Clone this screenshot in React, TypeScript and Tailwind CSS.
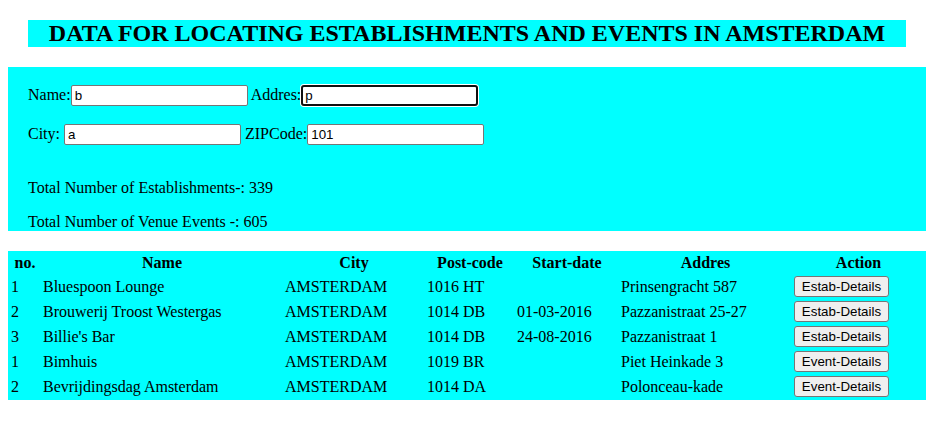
const rows = [
  { no: 1, name: 'Bluespoon Lounge', city: 'AMSTERDAM', zip: '1016 HT', start: '', addr: 'Prinsengracht 587', action: 'Estab-Details' },
  { no: 2, name: 'Brouwerij Troost Westergas', city: 'AMSTERDAM', zip: '1014 DB', start: '01-03-2016', addr: 'Pazzanistraat 25-27', action: 'Estab-Details' },
  { no: 3, name: "Billie's Bar", city: 'AMSTERDAM', zip: '1014 DB', start: '24-08-2016', addr: 'Pazzanistraat 1', action: 'Estab-Details' },
  { no: 1, name: 'Bimhuis', city: 'AMSTERDAM', zip: '1019 BR', start: '', addr: 'Piet Heinkade 3', action: 'Event-Details' },
  { no: 2, name: 'Bevrijdingsdag Amsterdam', city: 'AMSTERDAM', zip: '1014 DA', start: '', addr: 'Polonceau-kade', action: 'Event-Details' },
]

const inputCls =
  "h-[21px] w-[177px] rounded-[2px] border border-[#767676] bg-white px-[3px] font-['Liberation_Sans',Arial,sans-serif] text-[13.33px] text-black outline-none"

export default function App() {
  return (
    <div className="min-h-screen bg-white font-['Liberation_Serif','Times_New_Roman',serif] text-[16px] text-black">
      <div className="ml-[8px] w-[918px] pt-[20px]">
        <h1 className="mx-[20px] bg-[#00ffff] text-center text-[24px] leading-[27px] font-bold">
          DATA FOR LOCATING ESTABLISHMENTS AND EVENTS IN AMSTERDAM
        </h1>

        <div className="mt-[20px] bg-[#00ffff] px-[20px] pt-[18px] leading-[18px]">
          <div className="flex items-baseline">
            <span>Name:</span>
            <input className={inputCls} defaultValue="b" />
            <span className="ml-[3px]">Addres:</span>
            <input
              className="h-[21px] w-[177px] rounded-[3px] border-2 border-[#101010] bg-white px-[2px] font-['Liberation_Sans',Arial,sans-serif] text-[13.33px] text-black shadow-[0_0_0_1px_white] outline-none"
              defaultValue="p"
            />
          </div>
          <div className="mt-[18px] flex items-baseline">
            <span className="mr-[4px]">City:</span>
            <input className={inputCls} defaultValue="a" />
            <span className="ml-[4px]">ZIPCode:</span>
            <input className={inputCls} defaultValue="101" />
          </div>
          <div className="mt-[34px]">Total Number of Establishments-: 339</div>
          <div className="mt-[16px]">Total Number of Venue Events -: 605</div>
        </div>

        <table className="mt-[20px] w-[918px] table-fixed border-separate border-spacing-[2px] bg-[#00ffff] leading-[18px]">
          <thead>
            <tr>
              <th className="w-[30px] p-px text-center font-bold">no.</th>
              <th className="w-[240px] p-px text-center font-bold">Name</th>
              <th className="w-[140px] p-px text-center font-bold">City</th>
              <th className="w-[88px] p-px text-center font-bold">Post-code</th>
              <th className="w-[102px] p-px text-center font-bold">Start-date</th>
              <th className="w-[171px] p-px text-center font-bold">Addres</th>
              <th className="w-[131px] p-px text-center font-bold">Action</th>
            </tr>
          </thead>
          <tbody>
            {rows.map((r, i) => (
              <tr key={i}>
                <td className="p-px align-middle">{r.no}</td>
                <td className="p-px align-middle">{r.name}</td>
                <td className="p-px align-middle">{r.city}</td>
                <td className="p-px align-middle">{r.zip}</td>
                <td className="p-px align-middle">{r.start}</td>
                <td className="p-px align-middle">{r.addr}</td>
                <td className="p-px align-middle">
                  <button className="block h-[21px] w-[95px] rounded-[3px] border border-[#767676] bg-[#efefef] px-[6px] text-center font-['Liberation_Sans',Arial,sans-serif] text-[13.33px] leading-[17px] text-black">
                    {r.action}
                  </button>
                </td>
              </tr>
            ))}
          </tbody>
        </table>
      </div>
    </div>
  )
}
